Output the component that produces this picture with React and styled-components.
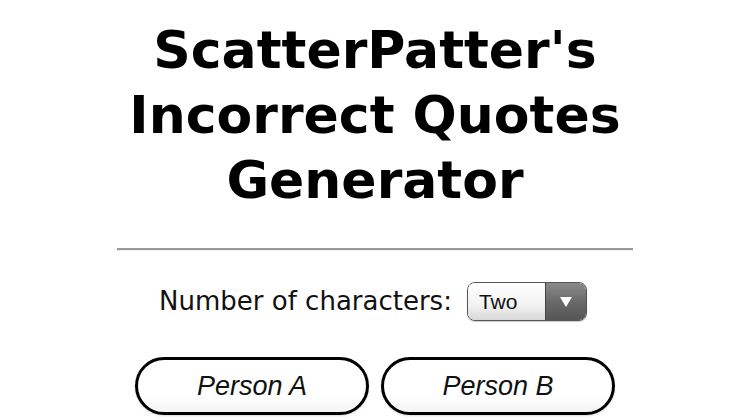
import React, { useState } from "react";
import styled, { createGlobalStyle } from "styled-components";

const GlobalStyle = createGlobalStyle`
  html, body {
    margin: 0;
    padding: 0;
    background: #fff;
  }
  body {
    font-family: "DejaVu Sans", Verdana, sans-serif;
    color: #000;
  }
`;

const Page = styled.div`
  width: 750px;
  height: 419px;
  overflow: hidden;
  display: flex;
  flex-direction: column;
  align-items: center;
`;

const Title = styled.h1`
  margin: 18px 0 0;
  font-family: "DejaVu Sans", Verdana, sans-serif;
  font-weight: bold;
  font-size: 52px;
  line-height: 65px;
  text-align: center;
`;

const Divider = styled.hr`
  width: 516px;
  margin: 35px 0 0;
  border: 0;
  border-top: 2px solid #999;
  border-bottom: 1px solid #eee;
`;

const OptionRow = styled.div`
  display: flex;
  align-items: center;
  gap: 15px;
  margin-top: 31px;
  margin-right: 4px;
`;

const Label = styled.span`
  font-size: 26px;
  color: #111;
  margin-top: -2px;
`;

const Select = styled.div`
  display: flex;
  width: 120px;
  height: 39px;
  box-sizing: border-box;
  border: 1px solid #555;
  border-radius: 8px;
  overflow: hidden;
  box-shadow: 0 1px 1px rgba(0, 0, 0, 0.2);
`;

const SelectValue = styled.div`
  flex: 1;
  display: flex;
  align-items: center;
  padding-left: 11px;
  padding-top: 1px;
  font-family: "Liberation Sans", Arial, sans-serif;
  font-size: 21px;
  color: #111;
  background: linear-gradient(#fff, #f2f2f2 60%, #d8d8d8);
`;

const SelectArrow = styled.div`
  width: 40px;
  display: flex;
  align-items: center;
  justify-content: center;
  border-left: 1px solid #444;
  background: linear-gradient(#8a8a8a, #6a6a6a 50%, #555);
`;

const ButtonRow = styled.div`
  display: flex;
  gap: 12px;
  margin-top: 36px;
`;

const PersonButton = styled.button`
  width: 234px;
  height: 58px;
  box-sizing: border-box;
  border: 3px solid #000;
  border-radius: 29px;
  background: linear-gradient(#fff 70%, #f4f4f4);
  box-shadow: 0 1px 2px rgba(0, 0, 0, 0.15);
  font-family: "Liberation Sans", Arial, sans-serif;
  font-style: italic;
  font-size: 27px;
  color: #111;
  padding: 0;
  cursor: pointer;
`;

export default function App() {
  const [count] = useState("Two");
  const people = ["Person A", "Person B"];

  return (
    <>
      <GlobalStyle />
      <Page>
        <Title>
          ScatterPatter's
          <br />
          Incorrect Quotes
          <br />
          Generator
        </Title>
        <Divider />
        <OptionRow>
          <Label>Number of characters:</Label>
          <Select>
            <SelectValue>{count}</SelectValue>
            <SelectArrow>
              <svg width="14" height="12" viewBox="0 0 14 12">
                <path d="M1 1 H13 L7 11 Z" fill="#fff" />
              </svg>
            </SelectArrow>
          </Select>
        </OptionRow>
        <ButtonRow>
          {people.map((p) => (
            <PersonButton key={p}>{p}</PersonButton>
          ))}
        </ButtonRow>
      </Page>
    </>
  );
}
